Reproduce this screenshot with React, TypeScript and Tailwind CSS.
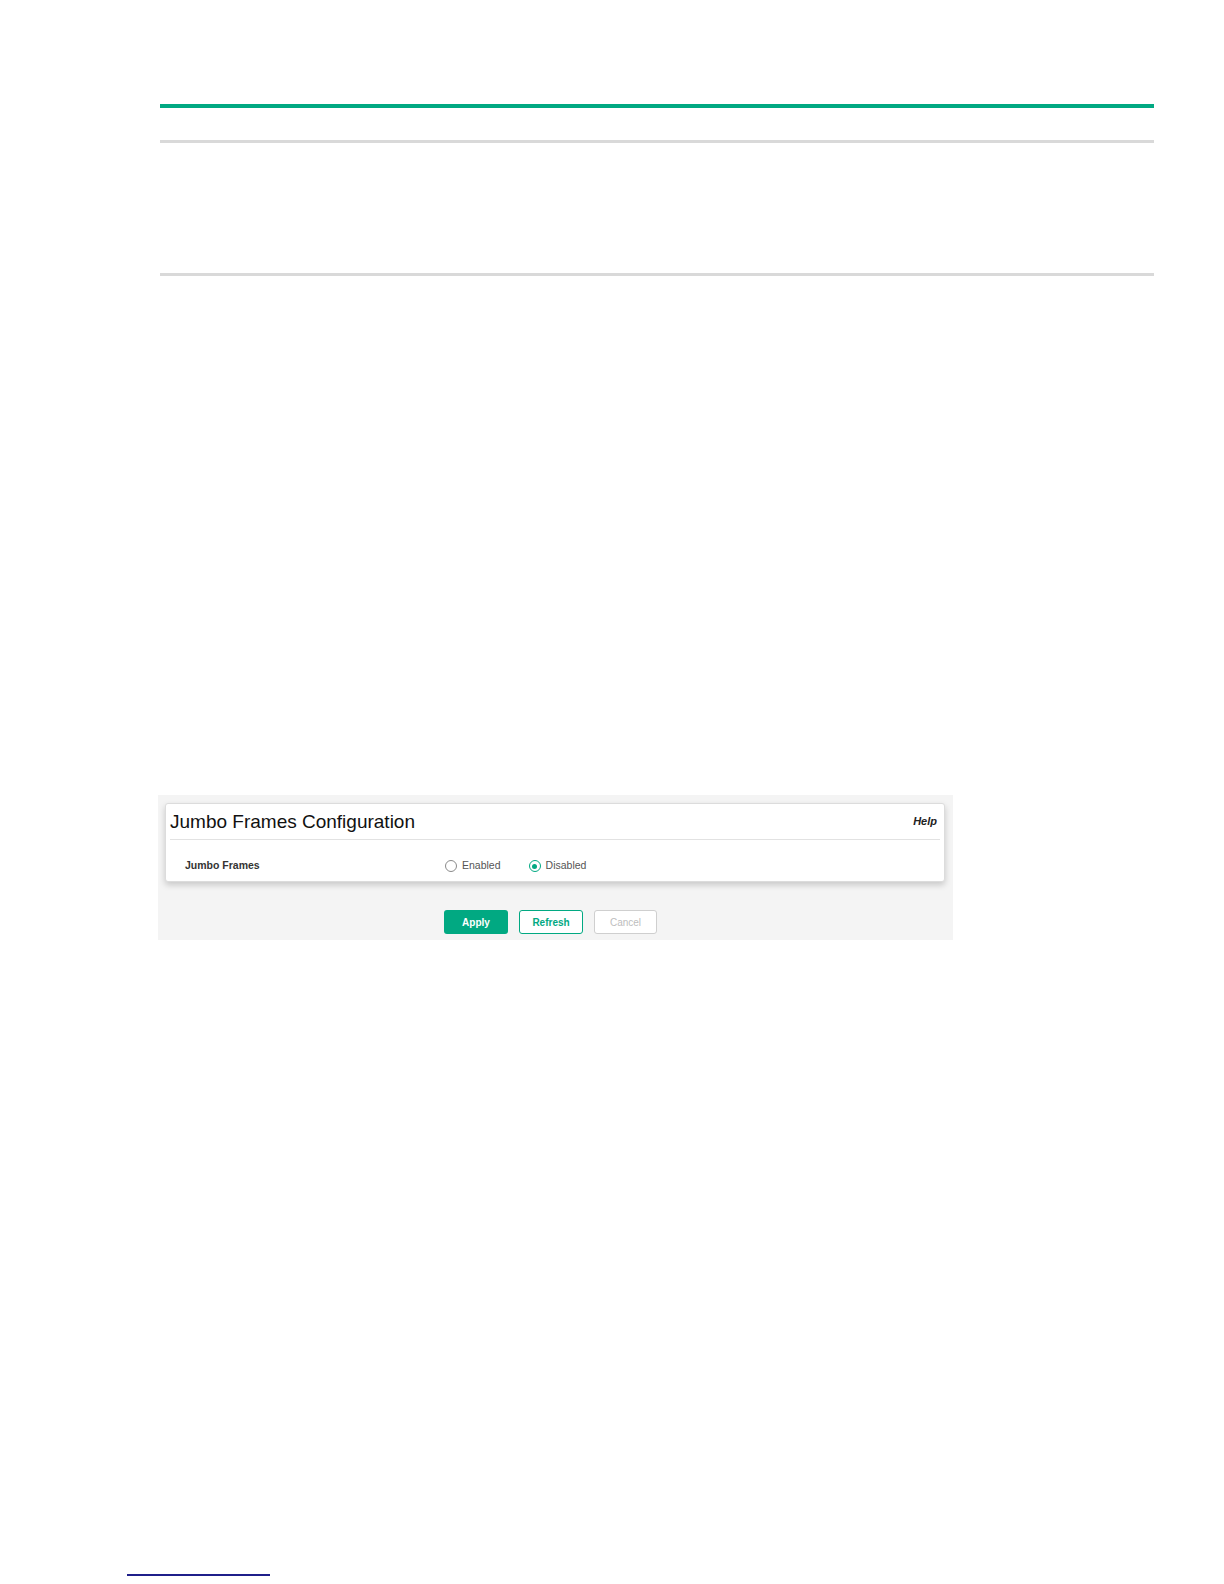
const Radio = ({ checked, label }: { checked: boolean; label: string }) => (
  <div className="flex items-center gap-[5px]">
    <span
      className={
        checked
          ? 'flex h-[12px] w-[12px] items-center justify-center rounded-full border-[1.5px] border-[#01a982] bg-white'
          : 'flex h-[12px] w-[12px] items-center justify-center rounded-full border-[1.5px] border-[#8a8a8a] bg-white'
      }
    >
      {checked && <span className="h-[5px] w-[5px] rounded-full bg-[#01a982]" />}
    </span>
    <span className="text-[10.5px] text-[#555]">{label}</span>
  </div>
);

const App = () => {
  return (
    <div className="relative h-[1584px] w-[1224px] bg-white font-['Liberation_Sans',Arial,sans-serif]">
      {/* header rules */}
      <div className="pl-[160px] pr-[70px] pt-[104px]">
        <div className="h-[4px] bg-[#01a982]" />
        <div className="mt-[32px] h-[3px] bg-[#d9d9d9]" />
        <div className="mt-[130px] h-[3px] bg-[#d9d9d9]" />
      </div>

      {/* screenshot panel */}
      <div className="ml-[158px] mt-[519px] h-[145px] w-[795px] bg-[#f4f4f4] pl-[7px] pt-[8px]">
        <div className="h-[79px] w-[780px] rounded-[3px] border border-[#dcdcdc] bg-white shadow-[0_3px_6px_rgba(0,0,0,0.18)]">
          <div className="flex h-[35px] items-center justify-between pl-[4px] pr-[7px]">
            <span className="text-[19px] leading-none text-[#111]">Jumbo Frames Configuration</span>
            <span className="text-[11px] font-bold italic text-[#222]">Help</span>
          </div>
          <div className="mx-[4px] h-px bg-[#e2e2e2]" />
          <div className="flex h-[42px] items-center pl-[19px] pt-[10px]">
            <span className="w-[260px] text-[10.5px] font-bold text-[#333]">Jumbo Frames</span>
            <div className="flex items-center gap-[28px]">
              <Radio checked={false} label="Enabled" />
              <Radio checked={true} label="Disabled" />
            </div>
          </div>
        </div>

        <div className="mt-[28px] flex gap-[11px] pl-[279px]">
          <button className="h-[24px] w-[64px] rounded-[3px] bg-[#01a982] text-[10px] font-bold text-white">
            Apply
          </button>
          <button className="h-[24px] w-[64px] rounded-[3px] border-[1.5px] border-[#01a982] bg-white text-[10px] font-bold text-[#01a982]">
            Refresh
          </button>
          <button className="h-[24px] w-[63px] rounded-[3px] border-[1.5px] border-[#cfcfcf] bg-white text-[10px] text-[#bdbdbd]">
            Cancel
          </button>
        </div>
      </div>

      {/* footer link rule */}
      <div className="ml-[127px] mt-[634px] h-[2px] w-[143px] bg-[#1f1f8a]" />
    </div>
  );
};

export default App;
